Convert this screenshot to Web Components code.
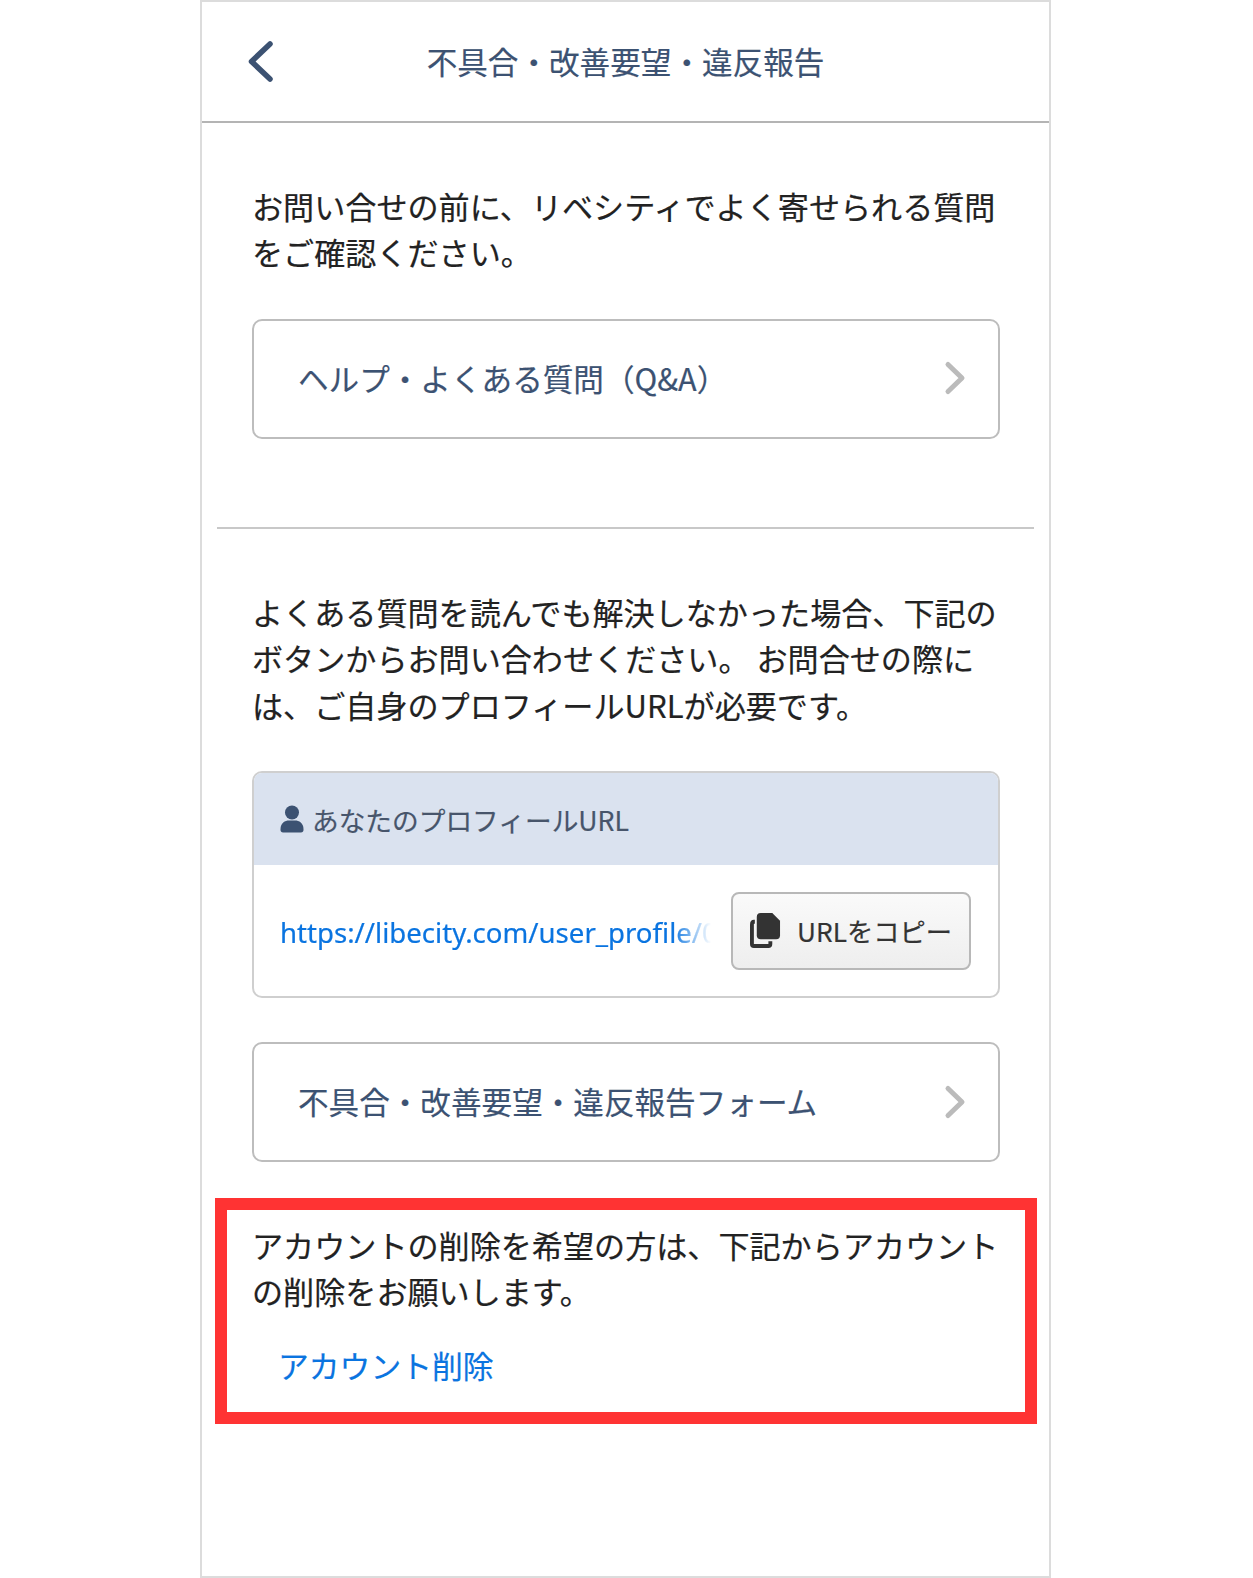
<!DOCTYPE html>
<html lang="ja">
<head>
<meta charset="utf-8">
<title>不具合・改善要望・違反報告</title>
<style>
  html, body { margin: 0; background: #fff; }
  body {
    font-family: "Noto Sans CJK JP", "Noto Sans", sans-serif;
    color: #222;
    -webkit-text-stroke: 0.2px currentColor;
  }
</style>
</head>
<body>
<help-screen>
  <top-bar>不具合・改善要望・違反報告</top-bar>
  <div style="padding: 60px 49px 0 50px">
    <info-text>お問い合せの前に、リベシティでよく寄せられる質問をご確認ください。</info-text>
    <link-card style="margin-top: 43px">ヘルプ・よくある質問（Q&amp;A）</link-card>
  </div>
  <hr-line style="margin-top: 88px"></hr-line>
  <div style="padding: 60px 49px 0 50px">
    <info-text>よくある質問を読んでも解決しなかった場合、下記のボタンからお問い合わせください。 お問合せの際には、ご自身のプロフィールURLが必要です。</info-text>
    <profile-url style="margin-top: 43px" url="https://libecity.com/user_profile/0">あなたのプロフィールURL</profile-url>
    <link-card style="margin-top: 44px">不具合・改善要望・違反報告フォーム</link-card>
  </div>
  <delete-note link="アカウント削除">
    <info-text>アカウントの削除を希望の方は、下記からアカウントの削除をお願いします。</info-text>
  </delete-note>
</help-screen>

<script>
class HelpScreen extends HTMLElement {
  constructor() {
    super();
    this.attachShadow({ mode: "open" }).innerHTML = `
      <style>
        :host {
          display: block;
          box-sizing: border-box;
          width: 851px;
          height: 1578px;
          margin: 0 auto 0 200px;
          border: 2px solid #dcdcdc;
          background: #fff;
        }
      </style>
      <slot></slot>`;
  }
}

class TopBar extends HTMLElement {
  constructor() {
    super();
    this.attachShadow({ mode: "open" }).innerHTML = `
      <style>
        :host {
          display: flex;
          align-items: center;
          justify-content: center;
          position: relative;
          box-sizing: content-box;
          height: 117px;
          padding-bottom: 2px;
          border-bottom: 2px solid #b4b4b4;
          font-size: 30.6px;
          color: #3c5272;
        }
        svg { position: absolute; left: 44px; top: 35px; }
      </style>
      <svg width="32" height="50" viewBox="0 0 32 50" fill="none">
        <path d="M24 7 L5.5 24.5 L24 42" stroke="#3c5272" stroke-width="5.5" stroke-linecap="round" stroke-linejoin="round"/>
      </svg>
      <span><slot></slot></span>`;
  }
}

class InfoText extends HTMLElement {
  constructor() {
    super();
    this.attachShadow({ mode: "open" }).innerHTML = `
      <style>
        :host {
          display: block;
          font-size: 31.1px;
          line-height: 46.4px;
          color: #222;
        }
      </style>
      <slot></slot>`;
  }
}

class LinkCard extends HTMLElement {
  constructor() {
    super();
    this.attachShadow({ mode: "open" }).innerHTML = `
      <style>
        :host {
          display: flex;
          align-items: center;
          justify-content: space-between;
          box-sizing: border-box;
          height: 120px;
          padding: 0 32px 0 44px;
          border: 2px solid #bdbdbd;
          border-radius: 10px;
          font-size: 30.6px;
          color: #3c5272;
        }
        span { margin-top: -2px; }
        svg { flex: none; margin-top: -1px; }
      </style>
      <span><slot></slot></span>
      <svg width="22" height="36" viewBox="0 0 22 36" fill="none">
        <path d="M4 4.5 L18 18 L4 31.5" stroke="#bbb" stroke-width="5" stroke-linecap="round" stroke-linejoin="round"/>
      </svg>`;
  }
}

class HrLine extends HTMLElement {
  constructor() {
    super();
    this.attachShadow({ mode: "open" }).innerHTML = `
      <style>
        :host { display: block; height: 2px; margin: 0 15px; background: #c8c8c8; }
      </style>`;
  }
}

class ProfileUrl extends HTMLElement {
  constructor() {
    super();
    this.attachShadow({ mode: "open" }).innerHTML = `
      <style>
        :host {
          display: block;
          box-sizing: border-box;
          height: 227px;
          border: 2px solid #cfcfcf;
          border-radius: 10px;
          overflow: hidden;
        }
        .head {
          display: flex;
          align-items: center;
          gap: 8px;
          height: 92px;
          padding-left: 26px;
          background: #dae2ef;
          font-size: 26.7px;
          color: #47556b;
        }
        .head svg { flex: none; }
        .body {
          display: flex;
          align-items: center;
          gap: 20px;
          height: 131px;
          padding: 0 27px 0 26px;
        }
        .url {
          flex: 1;
          min-width: 0;
          padding-top: 3px;
          overflow: hidden;
          white-space: nowrap;
          font-family: "Noto Sans", sans-serif;
          font-size: 27.6px;
          color: #0a74e0;
          -webkit-mask-image: linear-gradient(to right, #000 91%, transparent 100%);
          mask-image: linear-gradient(to right, #000 91%, transparent 100%);
        }
        button {
          flex: none;
          display: flex;
          align-items: center;
          gap: 16px;
          box-sizing: border-box;
          width: 240px;
          height: 78px;
          padding: 0 0 0 17px;
          border: 2px solid #b8b8b8;
          border-radius: 8px;
          background: linear-gradient(#fafafa, #eeeeee);
          font: inherit;
          font-size: 26.3px;
          color: #333;
        }
        button svg { flex: none; }
      </style>
      <div class="head">
        <svg width="24" height="28" viewBox="0 0 24 28">
          <circle cx="12" cy="7.5" r="7" fill="#3c5272"/>
          <path d="M0.5 24 C0.5 18 5 15.5 9 15.5 H15 C19 15.5 23.5 18 23.5 24 V25 C23.5 26.5 22.5 27.5 21 27.5 H3 C1.5 27.5 0.5 26.5 0.5 25 Z" fill="#3c5272"/>
        </svg>
        <span><slot></slot></span>
      </div>
      <div class="body">
        <span class="url"></span>
        <button type="button">
          <svg width="31" height="35" viewBox="0 0 32 36">
            <path d="M11 0 H23 L31 8 V23 Q31 27 27 27 H11 Q7 27 7 23 V4 Q7 0 11 0 Z" fill="#333"/>
            <path d="M0 12 Q0 7 4 7 H5 V11 H4 V32 H19 V29 H23 V32 Q23 36 19 36 H4 Q0 36 0 32 Z" fill="#333"/>
          </svg>
          <span>URLをコピー</span>
        </button>
      </div>`;
  }

  connectedCallback() {
    this.shadowRoot.querySelector(".url").textContent = this.getAttribute("url");
  }
}

class DeleteNote extends HTMLElement {
  constructor() {
    super();
    this.attachShadow({ mode: "open" }).innerHTML = `
      <style>
        :host {
          display: block;
          box-sizing: border-box;
          height: 226px;
          margin: 36px 12px 0 13px;
          padding: 12px 25px 0;
          border: 12px solid #ff3333;
        }
        a {
          display: block;
          margin: 27px 0 0 26px;
          font-size: 30.8px;
          line-height: 46px;
          color: #0a74e0;
          text-decoration: none;
        }
      </style>
      <slot></slot>
      <a href="#"></a>`;
  }

  connectedCallback() {
    this.shadowRoot.querySelector("a").textContent = this.getAttribute("link");
  }
}

customElements.define("help-screen", HelpScreen);
customElements.define("top-bar", TopBar);
customElements.define("info-text", InfoText);
customElements.define("link-card", LinkCard);
customElements.define("hr-line", HrLine);
customElements.define("profile-url", ProfileUrl);
customElements.define("delete-note", DeleteNote);
</script>
</body>
</html>
